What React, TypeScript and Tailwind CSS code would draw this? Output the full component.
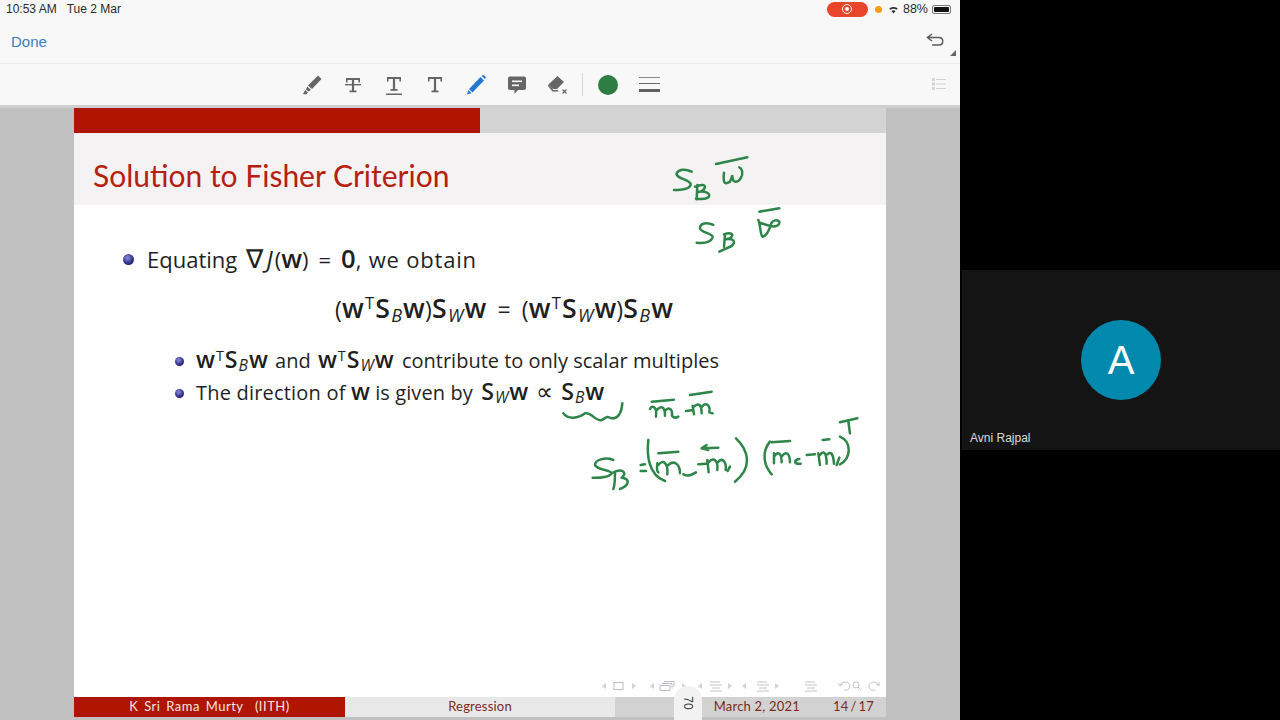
import React from "react";

const Sub = ({ c }: { c: string }) => (
  <span className="italic font-normal text-[0.78em] relative top-[0.22em] mx-[1px]">{c}</span>
);
const Sup = () => (
  <span className="font-normal text-[0.72em] relative -top-[0.5em] mx-[1px]">T</span>
);
const B = ({ children }: { children: React.ReactNode }) => <b className="font-semibold text-[1.16em] leading-none">{children}</b>;

const Ball = ({ big }: { big?: boolean }) => (
  <span
    className={`shrink-0 rounded-full bg-[radial-gradient(circle_at_40%_35%,#8c8ce0,#2a2a80_60%,#14144a)] ${
      big ? "w-[11px] h-[11px]" : "w-[9px] h-[9px]"
    }`}
  />
);

const G = "#2e8549";

const Ink = () => (
  <svg
    className="absolute left-0 top-0 pointer-events-none"
    width="960"
    height="720"
    viewBox="0 0 960 720"
    fill="none"
    stroke={G}
    strokeLinecap="round"
    strokeLinejoin="round"
  >
    <g transform="translate(650 140) scale(.3333)" strokeWidth="7.5">
      <path d="M125 95C105 85 85 88 80 100C76 115 120 118 122 132C122 148 95 150 72 150" />
      <path d="M142 135L140 178M135 140C160 130 172 135 160 150C150 158 145 155 142 156C165 152 185 160 175 172C165 178 150 178 138 176" />
      <path d="M198 72L292 52" />
      <path d="M222 98C218 130 225 135 240 125C245 115 245 110 247 108C248 130 262 130 272 115C282 100 275 85 268 82" />
      <path d="M190 255C170 245 150 250 150 265C152 278 190 280 188 292C182 308 160 310 140 308" />
      <path d="M225 285L222 320M222 283C245 275 255 285 240 295L228 298C250 295 260 305 245 318L208 335" />
      <path d="M328 215L388 205" />
      <path d="M325 240C332 255 330 285 338 290C350 288 358 270 364 250C368 240 382 238 388 245C390 255 378 262 362 258C350 256 340 252 330 248" />
    </g>
    <g transform="translate(550 385) scale(.3333)" strokeWidth="7.5">
      <path d="M40 85C55 105 85 100 105 85C125 80 135 110 155 105C170 100 165 90 185 100C205 100 215 80 217 55" />
      <path d="M305 50L372 44" />
      <path d="M300 72C305 60 322 62 318 95M320 75C335 60 345 65 345 92M345 78C355 65 368 70 366 92C372 100 380 98 385 95" />
      <path d="M408 78L425 76M420 30L485 20M428 62L432 88M432 65C445 52 455 58 455 85M455 66C465 52 482 55 478 82L488 85" />
      <path d="M190 225C165 215 135 225 135 240C140 255 185 255 185 265C180 275 150 280 128 278" />
      <path d="M195 265C195 285 195 300 190 312M190 262C215 250 235 262 215 278C240 280 240 300 210 312" />
      <path d="M272 240L285 238M272 258L288 258" />
      <path d="M295 165C290 210 295 270 345 288" />
      <path d="M325 205L385 200" />
      <path d="M322 235C320 250 322 260 325 262M325 240C340 220 355 235 352 268M355 240C370 225 390 235 390 265" />
      <path d="M400 268C410 275 425 270 438 262M445 238L470 236" />
      <path d="M455 190L505 188M470 180L455 190L475 195" />
      <path d="M472 225L476 262M476 232C490 215 505 225 502 255M503 232C515 218 530 225 527 255M540 245L533 258" />
      <path d="M558 160C600 200 605 250 555 290" />
      <path d="M660 170C635 200 640 240 665 268" />
      <path d="M665 172L720 168" />
      <path d="M672 205L672 235M674 212C685 198 695 205 695 232M697 212C708 198 720 205 720 232" />
      <path d="M748 222C732 222 730 240 752 236M770 210L795 208" />
      <path d="M818 165L838 163M805 205L810 240M810 210C820 196 830 200 830 236M832 208C842 198 850 205 852 236M868 218L860 240" />
      <path d="M870 155C905 170 905 220 870 238" />
      <path d="M870 112L922 100M895 108L900 145" />
    </g>
  </svg>
);

const IC = "#666666";

const TIcon = ({ strike, under }: { strike?: boolean; under?: boolean }) => (
  <svg width="22" height="22" viewBox="0 0 22 22" fill={IC}>
    <rect x="4" y={strike ? 4 : 3} width="14" height="2" />
    <rect x="4" y={strike ? 4 : 3} width="1.6" height="4.5" />
    <rect x="16.4" y={strike ? 4 : 3} width="1.6" height="4.5" />
    <rect x="9.9" y="4" width="2.2" height={under ? 12 : 13} />
    <rect x="7.5" y={under ? 15 : 16.5} width="7" height="1.8" />
    {strike && <rect x="3" y="10" width="16" height="1.4" />}
    {under && <rect x="3" y="19.5" width="16" height="1.5" />}
  </svg>
);

const Toolbar = () => (
  <div className="h-[41px] bg-[#f8f8f8] flex items-center pl-[301px] gap-[19px] relative">
    <svg width="22" height="22" viewBox="0 0 22 22" fill={IC}>
      <path d="M17 1.5L20.5 5L11 15L7 11.5Z" />
      <path d="M6.2 12.5L10 16L7.5 17.5L5 15.5Z" />
      <path d="M4.5 16L6.8 18.5L5.2 20.5L1.8 20Z" />
    </svg>
    <TIcon strike />
    <TIcon under />
    <TIcon />
    <svg width="22" height="22" viewBox="0 0 22 22" fill="#2478d0">
      <path d="M15.5 3L19 6.5L7.5 18.5L4 15Z" />
      <path d="M16.5 2L18 1C18.8 .8 20.6 2.4 20.8 3.4L20 5Z" />
      <path d="M3.3 16L6.6 19.3L2 20.6Z" />
    </svg>
    <svg width="22" height="22" viewBox="0 0 22 22">
      <path d="M4 2.5H18C19.3 2.5 20 3.2 20 4.5V14C20 15.3 19.3 16 18 16H12L8.5 20V16H4C2.7 16 2 15.3 2 14V4.5C2 3.2 2.7 2.5 4 2.5Z" fill={IC} />
      <rect x="6" y="6.5" width="10" height="1.6" fill="#f8f8f8" />
      <rect x="6" y="10.5" width="7" height="1.6" fill="#f8f8f8" />
    </svg>
    <svg width="22" height="22" viewBox="0 0 22 22" fill={IC}>
      <path d="M10.5 2L17 8L10 15H6L1.5 10.5Z" />
      <path d="M5.6 14.6L1.5 10.5L1 12L5.5 17.5H11.5L11 16H6Z" />
      <path d="M15.5 15.5L19.5 19.5M19.5 15.5L15.5 19.5" stroke={IC} strokeWidth="1.2" />
    </svg>
    <span className="w-px h-[23px] bg-[#d4d4d4] ml-[-6px]" />
    <span className="w-[20px] h-[20px] rounded-full bg-[#2e7d43] ml-[-4px]" />
    <span className="flex flex-col w-[21px] ml-[2px]">
      <span className="h-px bg-[#8a8a8a]" />
      <span className="h-[1.5px] bg-[#6a6a6a] mt-[5px]" />
      <span className="h-[3px] bg-[#5f5f5f] mt-[5px]" />
    </span>
    <svg className="absolute left-[931px] top-[12px]" width="16" height="16" viewBox="0 0 16 16" fill="#d2d2d2">
      <rect x="1" y="2" width="3" height="3" />
      <rect x="1" y="6.5" width="3" height="3" />
      <rect x="1" y="11" width="3" height="3" />
      <rect x="5" y="3" width="10" height="1" />
      <rect x="5" y="7.5" width="10" height="1" />
      <rect x="5" y="12" width="10" height="1" />
    </svg>
  </div>
);

const Nav = () => (
  <svg
    className="absolute left-[600px] top-[679px]"
    width="280"
    height="14"
    viewBox="0 0 280 14"
    fill="none"
    stroke="#c9c9cf"
    strokeWidth="1"
  >
    <path d="M6 4L2 7L6 10Z M32 4L36 7L32 10Z" fill="#d4d4d8" stroke="none" />
    <rect x="14" y="3.5" width="9" height="7" stroke="#bcbcc4" />
    <path d="M54 4L50 7L54 10Z M82 4L86 7L82 10Z" fill="#d4d4d8" stroke="none" />
    <path d="M60 6.5H70V11.5H60ZM62 4.5H72V9.5M64 2.5H74V7.5" stroke="#bcbcc4" />
    <path d="M102 4L98 7L102 10Z M128 4L132 7L128 10Z" fill="#d4d4d8" stroke="none" />
    <path d="M110 3H120M110 6H122M112 9H120M110 12H122" stroke="#c4c4ca" />
    <path d="M146 4L142 7L146 10Z M175 4L179 7L175 10Z" fill="#d4d4d8" stroke="none" />
    <path d="M157 3H167M157 6H169M159 9H167M157 12H169" stroke="#c4c4ca" />
    <path d="M205 3H215M205 6H217M207 9H215M205 12H217" stroke="#c4c4ca" />
    <path d="M240 6C242 2 250 2 250 7C250 10 247 12 244 11M238 4L240 7L243 5" stroke="#c4c4ca" />
    <circle cx="256" cy="6" r="3" stroke="#c4c4ca" />
    <path d="M258 8L261 11" stroke="#c4c4ca" />
    <path d="M279 6C277 2 269 2 269 7C269 10 272 12 275 11M276 5L279 7L279 3" stroke="#c4c4ca" />
  </svg>
);

export default function App() {
  return (
    <div className="relative w-[1280px] h-[720px] flex bg-black overflow-hidden font-['Open_Sans','Liberation_Sans',sans-serif]">
      <div className="w-[960px] h-full flex flex-col bg-[#c0c0c0] relative">
        <div className="h-[18px] bg-[#f8f8f8] flex items-center justify-between pl-[6px] pr-[9px] text-[12px] text-[#2a2a2a] font-['Liberation_Sans',sans-serif]">
          <div className="flex gap-[10px]">
            <span>10:53 AM</span>
            <span>Tue 2 Mar</span>
          </div>
          <div className="flex items-center">
            <span className="w-[41px] h-[15px] rounded-full bg-[#e8452a] flex items-center justify-center mr-[7px]">
              <span className="w-[10px] h-[10px] rounded-full border border-white flex items-center justify-center">
                <span className="w-[4px] h-[4px] rounded-full bg-white" />
              </span>
            </span>
            <span className="w-[7px] h-[7px] rounded-full bg-[#f89b1c] mr-[5px]" />
            <svg width="13" height="10" viewBox="0 0 13 10" className="mr-[3px]" fill="#333">
              <path d="M6.5 9.5L4.4 7C5.6 6 7.4 6 8.6 7Z" />
              <path d="M3.4 5.8L2.3 4.6C4.6 2.6 8.4 2.6 10.7 4.6L9.6 5.8C7.8 4.3 5.2 4.3 3.4 5.8Z" />
            </svg>
            <span className="text-[12.5px] mr-[4px]">88%</span>
            <span className="w-[19px] h-[9px] border border-[#777] rounded-[2px] p-[1px] flex">
              <span className="flex-1 bg-[#111] rounded-[1px]" />
            </span>
          </div>
        </div>
        <div className="h-[46px] bg-[#f8f8f8] border-b border-[#ececec] flex items-center justify-between pl-[11px] pr-[16px] relative">
          <span className="text-[15px] text-[#3a7ec4] font-['Liberation_Sans',sans-serif] mt-[4px]">Done</span>
          <svg width="18" height="14" viewBox="0 0 18 14" fill="none" stroke="#5c5c5c" strokeWidth="1.5" className="-mt-[1px]">
            <path d="M6 1L1.5 4.5L6 8M2 4.5H13C18 4.5 18 12 13 12H6" />
          </svg>
          <span className="absolute right-[4px] top-[32px] w-0 h-0 border-l-[6px] border-l-transparent border-b-[6px] border-b-[#666]" />
        </div>
        <Toolbar />
        <div className="h-[3px] bg-[#cfcfcf]" />
        <div className="ml-[74px] w-[812px] h-[609px] bg-white flex flex-col">
          <div className="h-[25px] flex bg-[#d4d4d4]">
            <div className="w-[406px] bg-[#af1500]" />
          </div>
          <div className="h-[72px] bg-[#f4f2f3] flex items-center pl-[19px] pt-[12px]">
            <h1 className="text-[30px] font-normal text-[#b5200f] font-['Lato',sans-serif]">Solution to Fisher Criterion</h1>
          </div>
          <div className="flex-1 flex flex-col text-[#1f1f1f]">
            <div className="flex items-center gap-[13px] pl-[49px] mt-[38px] h-[32px] text-[22px] whitespace-nowrap">
              <Ball big />
              <span>
                Equating<span className="ml-[9px] text-[26px] leading-none">∇</span><span className="ml-[3px] mr-[2px] text-[24px] leading-none"><i>J</i></span>(<B>w</B>)<span className="mx-[10px]">=</span><B>0</B><span className="tracking-[0.8px]">, we obtain</span>
              </span>
            </div>
            <div className="flex mt-[18px] h-[32px] items-center text-[23px] pl-[261px] whitespace-nowrap tracking-[0.2px]">
              <span>
                (<B>w</B><Sup /><B>S</B><Sub c="B" /><B>w</B>)<B>S</B><Sub c="W" /><B>w</B><span className="mx-[11px]">=</span>(<B>w</B><Sup /><B>S</B><Sub c="W" /><B>w</B>)<B>S</B><Sub c="B" /><B>w</B>
              </span>
            </div>
            <div className="flex items-center gap-[12px] pl-[101px] mt-[20px] h-[32px] text-[20px]">
              <Ball />
              <span className="whitespace-nowrap">
                <B>w</B><Sup /><B>S</B><Sub c="B" /><B>w</B><span className="ml-[2px]"> and </span><span className="ml-[2px]" /><B>w</B><Sup /><B>S</B><Sub c="W" /><B>w</B><span className="ml-[3px]"> contribute to only scalar multiples</span>
              </span>
            </div>
            <div className="flex items-center gap-[12px] pl-[101px] h-[32px] text-[20px]">
              <Ball />
              <span className="whitespace-nowrap">
                <span className="tracking-[0.2px]">The direction of </span><B>w</B> <span className="tracking-[0.1px]">is given by </span><span className="ml-[3px]" /><B>S</B><Sub c="W" /><B>w</B><span className="mx-[8px] text-[24px] leading-none">∝</span><B>S</B><Sub c="B" /><B>w</B>
              </span>
            </div>
          </div>
          <div className="h-[20px] flex text-[13px] font-['Lato',sans-serif] tracking-[0.2px]">
            <div className="w-[271px] bg-[#af1500] text-[#f6e6e2] flex items-center justify-center tracking-[0.5px] [word-spacing:2px]">K Sri Rama Murty&nbsp; (IITH)</div>
            <div className="w-[270px] bg-[#e8e8e8] text-[#7b2a22] flex items-center justify-center">Regression</div>
            <div className="flex-1 bg-[#d2d2d2] text-[#7b2a22] flex items-center justify-end pr-[12px] gap-[33px]">
              <span>March 2, 2021</span>
              <span className="[word-spacing:-1.5px]">14 / 17</span>
            </div>
          </div>
        </div>
        <Nav />
        <div className="absolute left-[674px] top-[686px] w-[28px] h-[34px] bg-[#f2f2f2] rounded-t-[14px] flex items-center justify-center">
          <span className="rotate-90 text-[12px] text-[#333] font-['Liberation_Sans',sans-serif]">70</span>
        </div>
        <Ink />
      </div>
      <div className="flex-1 flex items-center pl-[2px]">
        <div className="relative w-full h-[180px] bg-[#141414] flex items-center justify-center">
          <div className="w-[80px] h-[80px] rounded-full bg-[#0089ad] flex items-center justify-center text-white text-[40px] font-['Liberation_Sans',sans-serif]">
            A
          </div>
          <span className="absolute left-[8px] bottom-[3px] text-[12px] text-[#dcdcdc] font-['Liberation_Sans',sans-serif]">Avni Rajpal</span>
        </div>
      </div>
    </div>
  );
}
